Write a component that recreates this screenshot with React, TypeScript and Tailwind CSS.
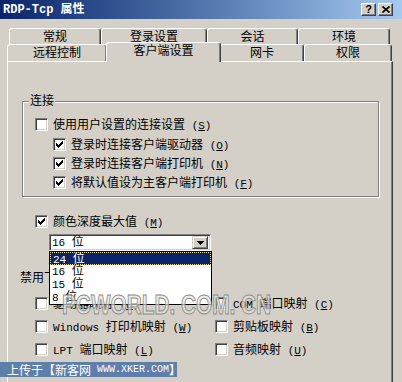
import React from "react";

const T = ({ s }: { s: string }) => (
  <>
    {s.split(/([ -~]+)/).map((p, i) =>
      /[ -~]/.test(p) ? (
        <span key={i} className="font-['Liberation_Mono',monospace] text-[11px]">
          {p}
        </span>
      ) : (
        <React.Fragment key={i}>{p}</React.Fragment>
      )
    )}
  </>
);

const Label = ({ text, m }: { text: string; m: string }) => (
  <span className="whitespace-pre leading-[13px]">
    <T s={text} />
    <span className="font-['Liberation_Mono',monospace] text-[11px]">
      (<span className="underline">{m}</span>)
    </span>
  </span>
);

const Check = () => (
  <svg width="7" height="7" viewBox="0 0 7 7" shapeRendering="crispEdges">
    <path
      fill="#000"
      d="M6 0h1v1h-1z M5 1h2v1h-2z M0 2h1v1h-1z M4 2h3v1h-3z M0 3h2v1h-2z M3 3h3v1h-3z M0 4h5v1h-5z M1 5h3v1h-3z M2 6h1v1h-1z"
    />
  </svg>
);

const Box = ({ checked }: { checked?: boolean }) => (
  <span className="w-[13px] h-[13px] shrink-0 bg-white border border-t-[#808080] border-l-[#808080] border-b-white border-r-white shadow-[inset_1px_1px_0_#404040,inset_-1px_-1px_0_#d4d0c8] flex items-center justify-center">
    {checked && <Check />}
  </span>
);

const Row = ({ checked, text, m }: { checked?: boolean; text: string; m: string }) => (
  <div className="flex items-center h-[13px]">
    <Box checked={checked} />
    <span className="ml-[5px]">
      <Label text={text} m={m} />
    </span>
  </div>
);

const tabBase =
  "border-t border-l border-white border-r border-r-[#404040] shadow-[inset_-1px_0_0_#808080] rounded-t-[3px] flex justify-center bg-[#d4d0c8]";

export default function App() {
  return (
    <div className="relative w-[402px] h-[382px] overflow-hidden bg-[#d4d0c8] text-[12px] text-black font-['Liberation_Sans','Noto_Sans_CJK_SC',sans-serif]">
      {/* title bar */}
      <div className="h-[19px] flex items-center justify-between pl-[3px] pr-[9px] bg-linear-to-r from-[#0a246a] to-[#a6caf0]">
        <span className="text-white font-bold text-[12px] leading-[14px] whitespace-pre font-['Liberation_Mono','Noto_Sans_CJK_SC',monospace]">
          RDP-Tcp 属性
        </span>
        <div className="flex gap-[2px]">
          <span className="w-[15px] h-[13px] bg-[#d4d0c8] border border-t-white border-l-white border-b-[#404040] border-r-[#404040] shadow-[inset_-1px_-1px_0_#808080] flex items-center justify-center font-bold text-[11px] leading-[11px] font-['Liberation_Sans',sans-serif]">
            ?
          </span>
          <span className="w-[15px] h-[13px] bg-[#d4d0c8] border border-t-white border-l-white border-b-[#404040] border-r-[#404040] shadow-[inset_-1px_-1px_0_#808080] flex items-center justify-center">
            <svg width="8" height="7" viewBox="0 0 8 7">
              <path d="M0.5 0.5 L7.5 6.5 M7.5 0.5 L0.5 6.5" stroke="#000" strokeWidth="1.6" />
            </svg>
          </span>
        </div>
      </div>

      {/* tab row 1 */}
      <div className="mt-[9px] ml-[9px] flex h-[16px]">
        {[
          ["常规", "w-[92px]"],
          ["登录设置", "w-[106px]"],
          ["会话", "w-[91px]"],
          ["环境", "w-[92px]"],
        ].map(([t, w]) => (
          <div key={t} className={`${tabBase} ${w} h-[17px] items-center leading-[13px]`}>
            {t}
          </div>
        ))}
      </div>

      {/* tab row 2 */}
      <div className="ml-[7px] flex h-[17px] relative z-10">
        <div className={`${tabBase} w-[100px] h-[17px] items-center leading-[13px]`}>远程控制</div>
        <div className={`${tabBase} relative z-10 w-[115px] -mx-[1px] -mt-[2px] h-[20px] items-start pt-[1px] leading-[14px]`}>
          客户端设置
        </div>
        <div className={`${tabBase} w-[84px] h-[17px] items-center leading-[13px]`}>网卡</div>
        <div className={`${tabBase} w-[88px] h-[17px] items-center leading-[13px]`}>权限</div>
      </div>

      {/* panel */}
      <div className="ml-[7px] w-[386px] h-[330px] border-t border-l border-white border-r border-r-[#404040] shadow-[inset_-1px_0_0_#808080] flex flex-col">
        {/* group box */}
        <div className="relative mt-[39px] ml-[14px] w-[357px] border border-[#808080] shadow-[1px_1px_0_#ffffff,inset_1px_1px_0_#ffffff] pt-[16px] pl-[12px] pb-[7px] flex flex-col">
          <span className="absolute left-[6px] -top-[7px] px-[1px] bg-[#d4d0c8] leading-[12px]">连接</span>
          <Row text="使用用户设置的连接设置 " m="S" />
          <div className="ml-[18px] flex flex-col">
            <div className="mt-[7px]">
              <Row checked text="登录时连接客户端驱动器 " m="O" />
            </div>
            <div className="mt-[6px]">
              <Row checked text="登录时连接客户端打印机 " m="N" />
            </div>
            <div className="mt-[6px]">
              <Row checked text="将默认值设为主客户端打印机 " m="F" />
            </div>
          </div>
        </div>

        {/* colour depth */}
        <div className="mt-[18px] ml-[27px]">
          <Row checked text="颜色深度最大值 " m="M" />
        </div>

        {/* combo */}
        <div className="relative mt-[6px] ml-[41px] w-[162px] h-[17px] bg-white border border-t-[#808080] border-l-[#808080] border-b-white border-r-white shadow-[inset_1px_1px_0_#404040,inset_-1px_-1px_0_#d4d0c8] flex items-center justify-between pl-[2px] pr-[2px]">
          <span className="leading-[13px] whitespace-pre">
            <T s="16 " />位
          </span>
          <span className="w-[16px] h-[13px] bg-[#d4d0c8] border border-t-[#d4d0c8] border-l-[#d4d0c8] border-b-[#404040] border-r-[#404040] shadow-[inset_1px_1px_0_#ffffff,inset_-1px_-1px_0_#808080] flex items-center justify-center">
            <svg width="7" height="4" viewBox="0 0 7 4" shapeRendering="crispEdges">
              <path d="M0 0h7v1h-7z M1 1h5v1h-5z M2 2h3v1h-3z M3 3h1v1h-1z" fill="#000" />
            </svg>
          </span>
          {/* dropdown list */}
          <div className="absolute left-[-1px] top-[16px] w-[163px] bg-white border border-black z-20 flex flex-col">
            {["24 ", "16 ", "15 ", "8 "].map((n, i) => (
              <div
                key={n}
                className={`h-[13px] pl-[2px] leading-[13px] whitespace-pre ${
                  i === 0 ? "bg-[#0a246a] text-white border border-dotted border-[#e8dca0] pl-[1px] leading-[11px]" : ""
                }`}
              >
                <T s={n} />位
              </div>
            ))}
          </div>
        </div>

        {/* disable label */}
        <div className="mt-[21px] ml-[12px] leading-[12px]">禁用下列</div>

        {/* bottom checkboxes */}
        <div className="mt-[13px] ml-[27px] grid grid-cols-[180px_auto] gap-y-[10px]">
          <Row text="驱动器映射 " m="D" />
          <Row text="COM 端口映射 " m="C" />
          <Row text="Windows 打印机映射 " m="W" />
          <Row text="剪贴板映射 " m="B" />
          <Row text="LPT 端口映射 " m="L" />
          <Row text="音频映射 " m="U" />
        </div>
      </div>

      {/* PCWORLD watermark */}
      <div className="absolute left-[62px] top-[292px] z-30 origin-left scale-x-[0.77] text-[27px] leading-[27px] font-bold whitespace-pre text-[#e6e4df]/70 [-webkit-text-stroke:1px_#8a8a8a] font-['Liberation_Sans',sans-serif]">
        PCWORLD. COM. CN
      </div>

      {/* bottom watermark */}
      <div className="absolute left-0 top-[362px] z-30 h-[15px] w-[177px] bg-[#5f7fab] text-white flex items-center pl-[7px] leading-[13px] whitespace-pre text-[12px] font-['Noto_Sans_CJK_SC',sans-serif]">
        上传于【新客网
        <span className="font-['Liberation_Mono',monospace] text-[10px]"> WWW.XKER.COM</span>】
      </div>
    </div>
  );
}
